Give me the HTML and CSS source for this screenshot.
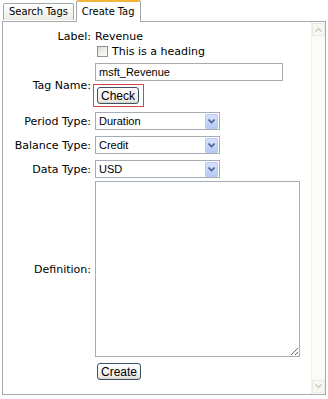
FILE: index.html
```html
<!DOCTYPE html>
<html lang="en">

<head>
  <meta charset="UTF-8" />
  <meta name="viewport" content="width=device-width, initial-scale=1.0" />
  <title>Create Tag</title>
  <link rel="stylesheet" href="styles.css">
</head>

<body>
  <!-- tabs -->
  <div class="tabs">
    <span class="tab">Search Tags</span>
    <span class="tab active">Create Tag</span>
  </div>

  <div class="panel">
    <div class="form">
      <div class="lbl row1">Label:</div>
      <div class="val row1">Revenue</div>

      <div class="lbl"></div>
      <label class="val check-row"><span class="checkbox"></span>This is a heading</label>

      <div class="lbl tag-lbl">Tag Name:</div>
      <div class="val tag-block">
        <input class="text" type="text" value="msft_Revenue" />
        <div class="check-box"><button class="btn">Check</button></div>
      </div>

      <div class="lbl">Period Type:</div>
      <div class="val">
        <div class="select"><span>Duration</span><span class="arrow"><svg width="7" height="5" viewBox="0 0 7 5"><path d="M0.5 0.5 L3.5 3.5 L6.5 0.5" fill="none" stroke="#4d6185" stroke-width="1.6"/></svg></span></div>
      </div>

      <div class="lbl">Balance Type:</div>
      <div class="val">
        <div class="select"><span>Credit</span><span class="arrow"><svg width="7" height="5" viewBox="0 0 7 5"><path d="M0.5 0.5 L3.5 3.5 L6.5 0.5" fill="none" stroke="#4d6185" stroke-width="1.6"/></svg></span></div>
      </div>

      <div class="lbl">Data Type:</div>
      <div class="val">
        <div class="select"><span>USD</span><span class="arrow"><svg width="7" height="5" viewBox="0 0 7 5"><path d="M0.5 0.5 L3.5 3.5 L6.5 0.5" fill="none" stroke="#4d6185" stroke-width="1.6"/></svg></span></div>
      </div>

      <div class="lbl">Definition:</div>
      <div class="val"><textarea class="area"></textarea></div>

      <div class="lbl"></div>
      <div class="val create-row"><button class="btn create">Create</button></div>
    </div>

    <!-- disabled scrollbar -->
    <div class="scrollbar">
      <span class="sb-btn"><svg width="7" height="5" viewBox="0 0 7 5"><path d="M0.5 4.5 L3.5 1.5 L6.5 4.5" fill="none" stroke="#c9c9c2" stroke-width="1.4"/></svg></span>
      <span class="sb-btn"><svg width="7" height="5" viewBox="0 0 7 5"><path d="M0.5 0.5 L3.5 3.5 L6.5 0.5" fill="none" stroke="#c9c9c2" stroke-width="1.4"/></svg></span>
    </div>
  </div>
</body>

</html>
```

FILE: styles.css
```css
* {
  margin: 0;
  padding: 0;
  box-sizing: border-box;
}

body {
  background: #fff;
  font: 11px "DejaVu Sans", Verdana, sans-serif;
  color: #000;
  padding-left: 2px;
  width: 326px;
}

.tabs {
  display: flex;
  align-items: flex-end;
  height: 21px;
  padding-left: 1px;
  gap: 2px;
  position: relative;
  z-index: 1;
}

.tab {
  height: 17px;
  padding: 1px 5px 0 5px;
  border: 1px solid #a0a7aa;
  border-bottom: none;
  border-radius: 2px 2px 0 0;
  background: linear-gradient(#ffffff, #ecebe5);
  font: 11px "DejaVu Sans Condensed", "DejaVu Sans", sans-serif;
  line-height: 14px;
  margin-bottom: 1px;
}

.tab.active {
  padding-top: 3px;
  padding-left: 5px;
  padding-right: 6px;
  background: #fff;
  border-top: 2px solid #f2b43c;
  margin-bottom: -1px;
  height: 22px;
}

.panel {
  display: flex;
  height: 374px;
  border: 1px solid #a6aaab;
}

.form {
  flex: 1;
  display: grid;
  grid-template-columns: 88px 1fr;
  column-gap: 4px;
  align-items: center;
  align-content: start;
  padding-top: 8px;
}

.lbl {
  text-align: right;
  white-space: nowrap;
}

.tag-lbl {
  padding-top: 3px;
}

.row1 {
  line-height: 14px;
}

.check-row {
  display: flex;
  align-items: center;
  height: 14px;
}

.checkbox {
  width: 11px;
  height: 11px;
  border: 1px solid #8d9399;
  background: linear-gradient(135deg, #dcdcd6, #fff);
  margin: 0 4px 0 2px;
}

.tag-block {
  padding: 5px 0 2px 0;
}

.text {
  display: block;
  width: 188px;
  height: 18px;
  border: 1px solid #a5acb2;
  padding: 0 3px;
  font: 11px "Liberation Sans", Arial, sans-serif;
  outline: none;
}

.check-box {
  display: inline-block;
  margin: 3px 0 0 -2px;
  padding: 2px 4px 2px 3px;
  border: 1px solid #d6474a;
}

.btn {
  display: block;
  height: 17px;
  padding: 0 3px;
  border: 1px solid #3c5263;
  border-radius: 3px;
  background: linear-gradient(#ffffff, #ecebe6 85%, #d6d0c5);
  font: 12px "Liberation Sans", Arial, sans-serif;
  color: #000;
}

.select {
  display: flex;
  align-items: center;
  justify-content: space-between;
  width: 125px;
  height: 18px;
  margin: 3px 0;
  padding: 0 1px 0 3px;
  border: 1px solid #a5acb2;
  font: 11px "Liberation Sans", Arial, sans-serif;
}

.arrow {
  display: flex;
  align-items: center;
  justify-content: center;
  width: 13px;
  height: 15px;
  border: 1px solid #b9cbf3;
  border-radius: 1px;
  background: linear-gradient(#d5e1fd, #b7c9f7);
}

.area {
  display: block;
  width: 205px;
  height: 176px;
  border: 1px solid #a5acb2;
  resize: vertical;
  outline: none;
}

.create-row {
  padding-top: 6px;
}

.create {
  margin-left: 2px;
}

.scrollbar {
  width: 14px;
  display: flex;
  flex-direction: column;
  justify-content: space-between;
  background: #fbfbf8;
  border-left: 1px solid #f0f0ea;
  padding: 1px 0;
}

.sb-btn {
  display: flex;
  align-items: center;
  justify-content: center;
  height: 13px;
  border: 1px solid #ecece6;
  background: #f7f7f3;
}
```
